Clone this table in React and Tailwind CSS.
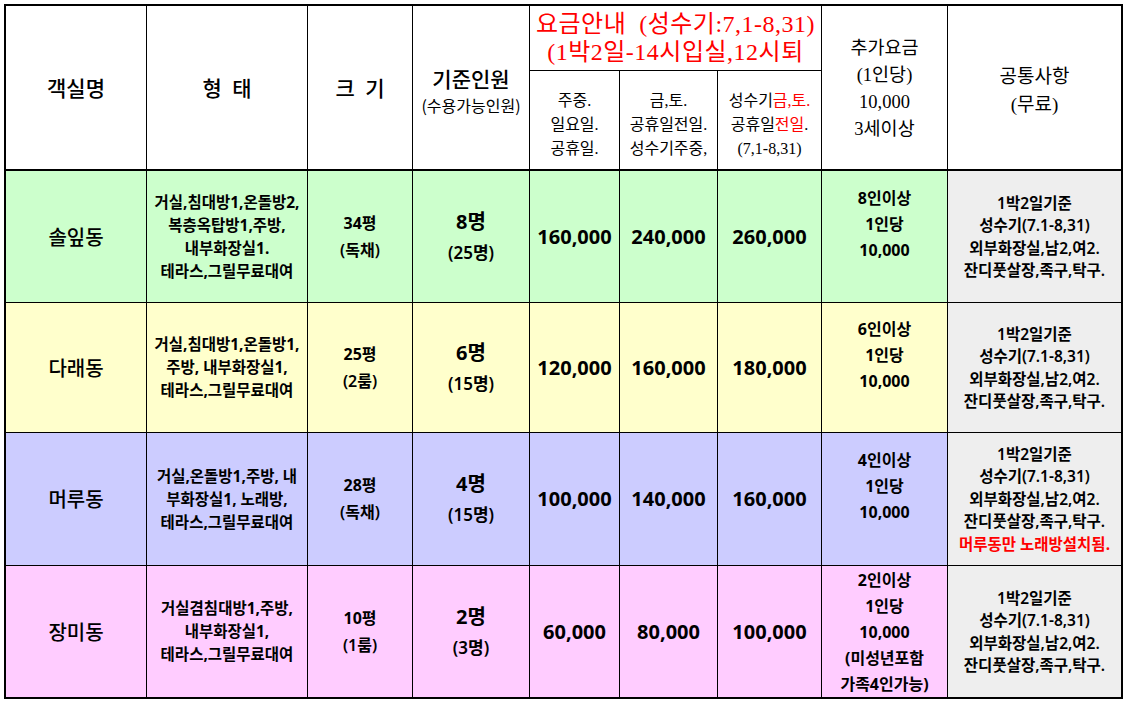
const sans = "[font-family:'Noto_Sans','Noto_Sans_CJK_KR',sans-serif]";
const kr = "[font-family:'Noto_Sans_CJK_KR',sans-serif]";
const serif = "[font-family:'Liberation_Serif','Noto_Sans_CJK_KR',serif]";
const cell = "flex flex-col items-center justify-center text-center text-black whitespace-nowrap overflow-hidden";

const rows = [
  {
    name: "솔잎동",
    bg: "bg-[#ccffcc]",
    type: ["거실,침대방1,온돌방2,", "복층옥탑방1,주방,", "내부화장실1.", "테라스,그릴무료대여"],
    size: ["34평", "(독채)"],
    cap: ["8명", "(25명)"],
    price: ["160,000", "240,000", "260,000"],
    extra: ["8인이상", "1인당", "10,000", "\u00a0"],
    red: null,
  },
  {
    name: "다래동",
    bg: "bg-[#ffffcc]",
    type: ["거실,침대방1,온돌방1,", "주방, 내부화장실1,", "테라스,그릴무료대여"],
    size: ["25평", "(2룸)"],
    cap: ["6명", "(15명)"],
    price: ["120,000", "160,000", "180,000"],
    extra: ["6인이상", "1인당", "10,000", "\u00a0"],
    red: null,
  },
  {
    name: "머루동",
    bg: "bg-[#ccccff]",
    type: ["거실,온돌방1,주방, 내", "부화장실1, 노래방,", "테라스,그릴무료대여"],
    size: ["28평", "(독채)"],
    cap: ["4명", "(15명)"],
    price: ["100,000", "140,000", "160,000"],
    extra: ["4인이상", "1인당", "10,000", "\u00a0"],
    red: "머루동만 노래방설치됨.",
  },
  {
    name: "장미동",
    bg: "bg-[#ffccff]",
    type: ["거실겸침대방1,주방,", "내부화장실1,", "테라스,그릴무료대여"],
    size: ["10평", "(1룸)"],
    cap: ["2명", "(3명)"],
    price: ["60,000", "80,000", "100,000"],
    extra: ["2인이상", "1인당", "10,000", "(미성년포함", "가족4인가능)"],
    red: null,
  },
];

const common = ["1박2일기준", "성수기(7.1-8,31)", "외부화장실,남2,여2.", "잔디풋살장,족구,탁구."];

function Row({ r }) {
  return (
    <>
      <div className={`${cell} ${r.bg} ${kr} text-[20px] font-medium`}>{r.name}</div>
      <div className={`${cell} ${r.bg} ${sans} text-[15.5px] font-bold leading-[23px]`}>
        {r.type.map((t, i) => (
          <div key={i}>{t}</div>
        ))}
      </div>
      <div className={`${cell} ${r.bg} ${sans} text-[16px] font-bold leading-[27px]`}>
        <div>{r.size[0]}</div>
        <div className="font-semibold">{r.size[1]}</div>
      </div>
      <div className={`${cell} ${r.bg} ${sans} font-bold`}>
        <div className="text-[20px] leading-[31px]">{r.cap[0]}</div>
        <div className="text-[17px] leading-[31px] font-semibold">{r.cap[1]}</div>
      </div>
      {r.price.map((p, i) => (
        <div key={i} className={`${cell} ${r.bg} ${sans} text-[20px] font-bold`}>
          {p}
        </div>
      ))}
      <div className={`${cell} ${r.bg} ${sans} text-[16px] font-bold leading-[26px]`}>
        {r.extra.map((t, i) => (
          <div key={i}>{t}</div>
        ))}
      </div>
      <div className={`${cell} bg-[#eeeeee] ${sans} text-[15.5px] font-semibold leading-[22.5px]`}>
        {common.map((t, i) => (
          <div key={i}>{t}</div>
        ))}
        {r.red && <div className="text-[#ff0000] font-bold">{r.red}</div>}
      </div>
    </>
  );
}

export default function App() {
  return (
    <div className="w-[1129px] h-[703px] bg-white pt-1 pl-1">
      <div className="grid w-[1119px] grid-cols-[140px_160px_104px_116px_89px_97px_103px_125px_173px] grid-rows-[64px_99px_131px_129px_132px_131px] gap-px bg-black border-2 border-black">
        <div className={`${cell} row-span-2 bg-white border-b border-black ${kr} text-[21px] font-medium`}>객실명</div>
        <div className={`${cell} row-span-2 bg-white border-b border-black ${kr} text-[21px] font-medium`}>형{"\u2002"}태</div>
        <div className={`${cell} row-span-2 bg-white border-b border-black ${kr} text-[21px] font-medium`}>크{"\u2002"}기</div>
        <div className={`${cell} row-span-2 bg-white border-b border-black ${kr} pt-2`}>
          <div className="text-[21px] leading-[27px] font-medium">기준인원</div>
          <div className="text-[16px] leading-[27px]">(수용가능인원)</div>
        </div>
        <div className={`${cell} col-span-3 bg-white ${serif} text-[24px] leading-[28px] tracking-[0.5px] text-[#ff0000]`}>
          <div className="text-[#ff0000]">요금안내{"\u00a0\u00a0"}(성수기:7,1-8,31)</div>
          <div className="text-[#ff0000]">(1박2일-14시입실,12시퇴</div>
        </div>
        <div className={`${cell} row-span-2 bg-white border-b border-black ${serif} text-[18.5px] leading-[27px] pt-[3px]`}>
          <div>추가요금</div>
          <div>(1인당)</div>
          <div>10,000</div>
          <div>3세이상</div>
        </div>
        <div className={`${cell} row-span-2 bg-white border-b border-black ${serif} text-[19px] leading-[28px] pt-[6px]`}>
          <div>공통사항</div>
          <div>(무료)</div>
        </div>
        <div className={`${cell} bg-white border-b border-black ${serif} text-[16px] leading-[24px] pt-[9px]`}>
          <div>주중.</div>
          <div>일요일.</div>
          <div>공휴일.</div>
        </div>
        <div className={`${cell} bg-white border-b border-black ${serif} text-[16px] leading-[24px] pt-[9px]`}>
          <div>금,토.</div>
          <div>공휴일전일.</div>
          <div>성수기주중,</div>
        </div>
        <div className={`${cell} bg-white border-b border-black ${serif} text-[16px] leading-[24px] pt-[9px]`}>
          <div>
            성수기<span className="text-[#ff0000]">금,토.</span>
          </div>
          <div>
            공휴일<span className="text-[#ff0000]">전일</span>.
          </div>
          <div>(7,1-8,31)</div>
        </div>
        {rows.map((r) => (
          <Row key={r.name} r={r} />
        ))}
      </div>
    </div>
  );
}
